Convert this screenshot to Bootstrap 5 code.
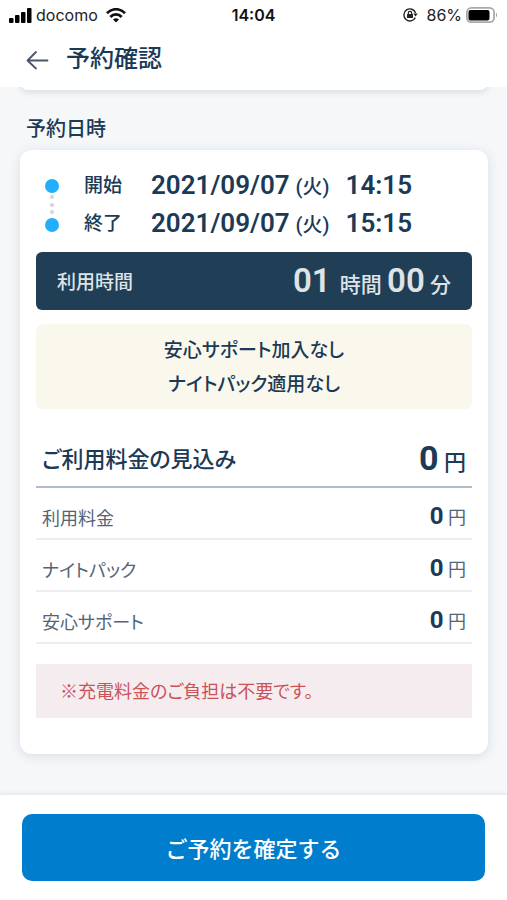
<!DOCTYPE html>
<html lang="ja">
<head>
<meta charset="utf-8">
<meta name="viewport" content="width=device-width, initial-scale=1">
<title>予約確認</title>
<link href="https://cdn.jsdelivr.net/npm/bootstrap@5.3.0/dist/css/bootstrap.min.css" rel="stylesheet">
<style>
  :root { --navy: #203f57; --ink: #1b3a56; }
  body { font-family: Roboto, "Noto Sans CJK JP", sans-serif; color: var(--ink); background: #f5f7f9; }
  .status-bar { height: 30px; font: 400 16px/20px Inter, sans-serif; color: #222; padding: 0 9px; }
  .status-side { flex: 1 1 0; }
  .clock { font-weight: 600; color: #111; }
  .page-header { position: relative; z-index: 1; }
  .title-bar { height: 57px; padding: 0 24px; gap: 16px; }
  .title-bar h1 { font-size: 24px; line-height: 32px; font-weight: 500; }
  .back-link { line-height: 0; padding-top: 4px; }
  .sheet { border: 0; border-radius: 12px; box-shadow: 0 2px 12px rgba(60, 80, 90, .14); }
  .sheet-tail { height: 16px; margin-top: -13px; box-shadow: 0 2px 6px rgba(60, 80, 80, .16); }
  .content { padding: 0 19px 0 20px; }
  .section-title { font-size: 20px; line-height: 28px; font-weight: 500; margin: 25px 6px 7px; }
  .sheet-body { padding: 17px 16px 36px; }
  .period { gap: 24px; padding: 0 8px; }
  .period-row { height: 38px; }
  .period-row dt { width: 67px; font-size: 19px; font-weight: 500; }
  .period-row dd { font-size: 26px; line-height: 38px; font-weight: 600; white-space: pre; }
  .period-row small { font-size: 20px; font-weight: 500; padding: 0 16px 0 6px; }
  .duration { height: 58px; margin-top: 9px; padding: 4px 21px 0; border-radius: 6px; background: var(--navy); color: #dfe3e6; font-size: 19px; font-weight: 500; }
  .duration-value { font-size: 21px; line-height: 40px; }
  .duration-value strong { font-size: 33px; font-weight: 600; }
  .duration-value strong:first-child { margin-right: 4px; }
  .options { margin-top: 14px; padding: 10px 0 7px; border-radius: 6px; background: #faf8ec; font-size: 19px; line-height: 34px; font-weight: 500; font-feature-settings: "palt"; }
  .fees { margin-top: 20px; line-height: 28px; font-size: 18px; }
  .fees th { font-feature-settings: "palt"; }
  .fees th, .fees td { height: 52px; padding: 11px 6px 0; font-weight: 400; color: #526577; border-bottom: 2px solid #eceef0; vertical-align: middle; }
  .fees td { padding-top: 8px; text-align: right; }
  .fees strong { font-size: 24px; font-weight: 700; color: var(--ink); }
  .fees thead th, .fees thead td { height: 58px; padding-top: 5px; font-size: 22px; font-weight: 500; color: var(--ink); border-color: #b1bbca; }
  .fees thead strong { font-size: 34px; }
  .note { margin: 20px 0 0; padding: 14px 24px 12px; background: #f5ecef; color: #cb5257; font-size: 18px; line-height: 28px; font-feature-settings: "palt"; }
  .action-bar { padding: 19px 22px; min-height: 105px; box-shadow: 0 -2px 4px rgba(60, 70, 80, .08); }
  .btn-reserve { height: 67px; padding-top: 10px; border-radius: 10px; font-size: 22px; font-weight: 500; color: #fff; background: #007dcc; }
  .btn-reserve:hover { color: #fff; background: #006fb6; }
</style>
</head>
<body class="d-flex flex-column min-vh-100">
<header class="page-header bg-white">
  <div class="status-bar d-flex align-items-center">
    <div class="status-side d-flex align-items-center">
      <svg width="23" height="15" viewBox="0 0 23 15" aria-hidden="true"><rect y="10" width="4.500" height="5" rx="1"/><rect x="6" y="7" width="4.500" height="8" rx="1"/><rect x="12" y="4" width="4.500" height="11" rx="1"/><rect x="18" width="4.500" height="15" rx="1"/></svg>
      <span class="ms-1">docomo</span>
      <svg class="ms-2" width="20" height="15" viewBox="0 0 20 15" fill="none" stroke="#111" stroke-width="2.700" aria-hidden="true"><path d="M1 5.200C6-.1 14-.1 19 5.200M4.300 9C7.500 5.500 12.500 5.500 15.700 9"/><path d="M10 14.500 7 11.400Q10 9 13 11.400Z" fill="#111" stroke="none"/></svg>
    </div>
    <time class="clock">14:04</time>
    <div class="status-side d-flex align-items-center justify-content-end">
      <svg width="15" height="14" viewBox="0 0 15 14" fill="none" stroke="#222" stroke-width="1.400" aria-hidden="true"><path d="M12.300 9.600A6 6 0 1 1 12.600 5"/><path d="M10.300 5.600h4.400l-2.100 3Z" fill="#222" stroke="none"/><rect x="4" y="6" width="6" height="4" rx=".5" fill="#222" stroke="none"/><path d="M5.300 6.300V5a1.700 1.700 0 0 1 3.400 0v1.300" stroke-width="1.200"/></svg>
      <span class="ms-2 me-1">86%</span>
      <svg width="32" height="18" viewBox="0 0 32 18" aria-hidden="true"><rect x=".9" y="1.900" width="27.200" height="14.200" rx="4.500" fill="none" stroke="#aaa" stroke-width="1.800"/><rect x="2.500" y="4" width="21" height="10.500" rx="2"/><path d="M30 6.500q2 2.500 0 5Z" fill="#999"/></svg>
    </div>
  </div>
  <div class="title-bar d-flex align-items-center">
    <a class="back-link" href="#" aria-label="戻る"><svg width="26" height="22" viewBox="0 0 26 22" fill="none" stroke="#4c5567" stroke-width="1.800" stroke-linecap="round" stroke-linejoin="round"><path d="M23.500 10.500H3.500M12 2 3.500 10.500l8.500 8"/></svg></a>
    <h1 class="mb-0">予約確認</h1>
  </div>
</header>

<main class="content flex-grow-1">
  <div class="sheet sheet-tail bg-white"></div>
  <h2 class="section-title">予約日時</h2>
  <section class="card sheet">
    <div class="sheet-body">
      <div class="period d-flex align-items-center">
        <svg width="16" height="56" viewBox="0 0 16 56" fill="#22aefb" aria-hidden="true"><circle cx="8" cy="9" r="7"/><circle cx="8" cy="48" r="7"/><g fill="#d8d3da"><circle cx="8" cy="20" r="2"/><circle cx="8" cy="28" r="2"/><circle cx="8" cy="35" r="2"/></g></svg>
        <dl class="mb-0">
          <div class="period-row d-flex align-items-center"><dt>開始</dt><dd class="mb-0">2021/09/07<small>(火)</small>14:15</dd></div>
          <div class="period-row d-flex align-items-center"><dt>終了</dt><dd class="mb-0">2021/09/07<small>(火)</small>15:15</dd></div>
        </dl>
      </div>
      <div class="duration d-flex align-items-center justify-content-between">
        <span>利用時間</span>
        <span class="duration-value"><strong>01</strong> 時間 <strong>00</strong> 分</span>
      </div>
      <div class="options text-center">
        <div>安心サポート加入なし</div>
        <div>ナイトパック適用なし</div>
      </div>
      <table class="fees w-100">
        <thead><tr><th scope="col">ご利用料金の見込み</th><td><strong>0</strong> 円</td></tr></thead>
        <tbody>
          <tr><th scope="row">利用料金</th><td><strong>0</strong> 円</td></tr>
          <tr><th scope="row">ナイトパック</th><td><strong>0</strong> 円</td></tr>
          <tr><th scope="row">安心サポート</th><td><strong>0</strong> 円</td></tr>
        </tbody>
      </table>
      <p class="note">※充電料金のご負担は不要です。</p>
    </div>
  </section>
</main>

<footer class="action-bar bg-white">
  <button type="button" class="btn btn-reserve w-100">ご予約を確定する</button>
</footer>
<script src="https://cdn.jsdelivr.net/npm/bootstrap@5.3.0/dist/js/bootstrap.bundle.min.js"></script>
</body>
</html>
